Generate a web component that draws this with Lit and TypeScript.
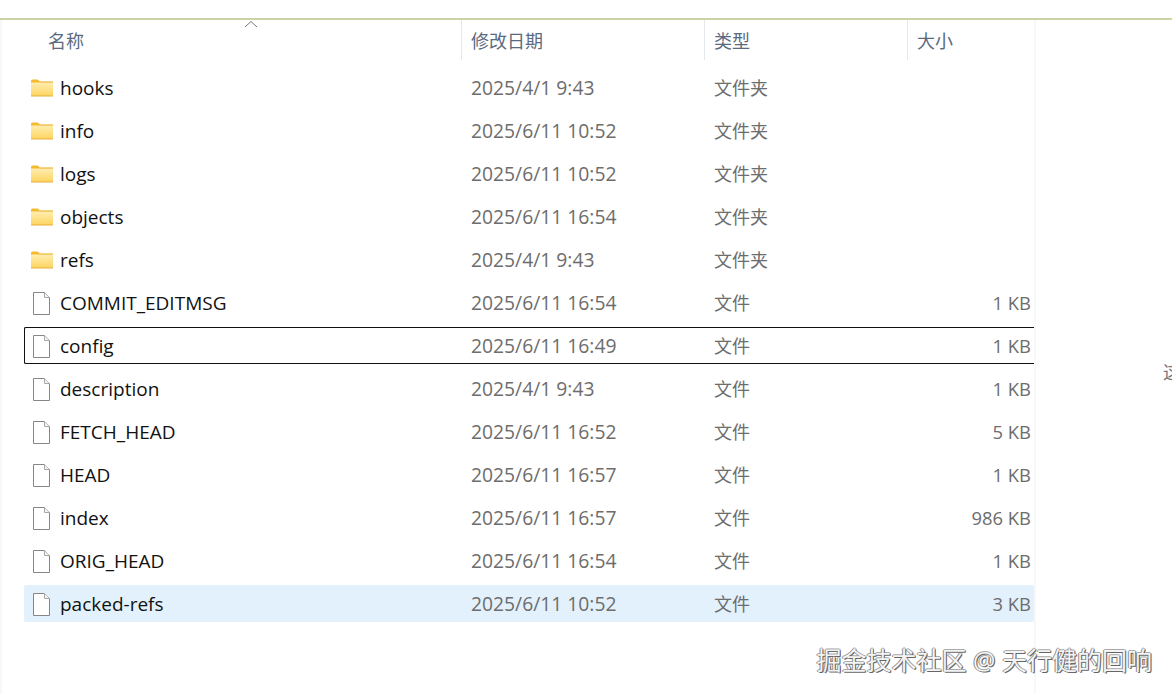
import { LitElement, html, css, svg } from "lit";
import { customElement } from "lit/decorators.js";

type Entry = { name: string; date: string; type: string; size: string; state?: string };

const folders: Entry[] = [
  { name: "hooks", date: "2025/4/1 9:43", type: "文件夹", size: "" },
  { name: "info", date: "2025/6/11 10:52", type: "文件夹", size: "" },
  { name: "logs", date: "2025/6/11 10:52", type: "文件夹", size: "" },
  { name: "objects", date: "2025/6/11 16:54", type: "文件夹", size: "" },
  { name: "refs", date: "2025/4/1 9:43", type: "文件夹", size: "" },
];

const files: Entry[] = [
  { name: "COMMIT_EDITMSG", date: "2025/6/11 16:54", type: "文件", size: "1 KB" },
  { name: "config", date: "2025/6/11 16:49", type: "文件", size: "1 KB", state: "focused" },
  { name: "description", date: "2025/4/1 9:43", type: "文件", size: "1 KB" },
  { name: "FETCH_HEAD", date: "2025/6/11 16:52", type: "文件", size: "5 KB" },
  { name: "HEAD", date: "2025/6/11 16:57", type: "文件", size: "1 KB" },
  { name: "index", date: "2025/6/11 16:57", type: "文件", size: "986 KB" },
  { name: "ORIG_HEAD", date: "2025/6/11 16:54", type: "文件", size: "1 KB" },
  { name: "packed-refs", date: "2025/6/11 10:52", type: "文件", size: "3 KB", state: "selected" },
];

const folderIcon = svg`<svg class="icon" width="22" height="18" viewBox="0 0 22 18">
  <defs>
    <linearGradient id="fg" x1="0" y1="0" x2="0" y2="1">
      <stop offset="0" stop-color="#ffeeb0" />
      <stop offset="1" stop-color="#fdd460" />
    </linearGradient>
  </defs>
  <path d="M0 2Q0 .5 1.5 .5H6.5L9 2.5H22V6H0Z" fill="#f5b92e" />
  <rect x="0" y="3.5" width="22" height="13.5" fill="url(#fg)" />
  <path d="M0 16.5H22V17.5H0Z" fill="#e6ae3a" />
  <path d="M9 2.6H22V3.6H9Z" fill="#eec566" />
</svg>`;

const fileIcon = svg`<svg class="icon" width="17" height="23" viewBox="0 0 17 23">
  <path d="M.5.5H11.5L16.5 5.5V22.5H.5Z" fill="#fff" stroke="#868686" />
  <path d="M11.5.5V5.5H16.5" fill="#f2f2f2" stroke="#a8a8a8" />
</svg>`;

@customElement("app-root")
export class AppRoot extends LitElement {
  static styles = css`
    :host {
      display: block;
      position: relative;
      width: 1172px;
      height: 694px;
      overflow: hidden;
      background: #fff;
      font-family: "Open Sans", "Noto Sans CJK SC", sans-serif;
      font-size: 19px;
    }
    .topline {
      margin-top: 18px;
      height: 2px;
      background: #c9d3a6;
    }
    .panel {
      width: 1036px;
      height: 674px;
      box-sizing: border-box;
      border-left: 2px solid #f8f8f8;
      border-right: 2px solid #f8f8f8;
    }
    .cols {
      display: grid;
      grid-template-columns: 437px 243px 203px 127px;
      margin-left: 22px;
      width: 1010px;
    }
    .header {
      height: 40px;
      position: relative;
      color: #5a6a80;
      font-size: 18px;
    }
    .header > div {
      display: flex;
      align-items: center;
      padding-left: 9px;
      border-left: 1px solid #e4e7eb;
    }
    .header > .name {
      padding-left: 24px;
      border-left: none;
    }
    .sort {
      position: absolute;
      left: 220px;
      top: 0;
    }
    .list {
      margin-top: 9px;
      display: flex;
      flex-direction: column;
      gap: 6px;
    }
    .row {
      height: 37px;
      box-sizing: border-box;
      align-items: center;
      color: #6d6d6d;
      line-height: 38px;
      white-space: nowrap;
    }
    .row.focused {
      box-shadow: inset 1px 0 0 #111, inset 0 1px 0 #111, inset 0 -1px 0 #111;
      border-radius: 2px 0 0 2px;
    }
    .row.selected {
      background: #e3f1fc;
      border-radius: 2px;
    }
    .cell-name {
      display: flex;
      align-items: center;
      color: #111;
    }
    .icon-box {
      width: 36px;
      padding-left: 7px;
      box-sizing: border-box;
      display: flex;
      align-items: center;
    }
    .file .icon-box {
      padding-left: 9px;
    }
    .cell-date {
      font-size: 19.3px;
      padding-left: 10px;
    }
    .cell-type {
      font-size: 18px;
      padding-left: 10px;
    }
    .cell-size {
      font-size: 18.4px;
      text-align: right;
      padding-right: 3px;
    }
    .cut {
      position: absolute;
      left: 1163px;
      top: 358px;
      color: #777;
      font-size: 18px;
    }
    .watermark {
      position: absolute;
      right: 20px;
      top: 643px;
      font-size: 25px;
      line-height: 34px;
      white-space: nowrap;
      color: #f4f4f4;
      text-shadow: 1px 1px 0 #666, -1px 0 0 #8a8a8a, 0 -1px 0 #aaa, 1px 0 0 #888;
    }
  `;

  private renderRow(e: Entry, icon: unknown, kind: string) {
    return html`<div class="cols row ${kind} ${e.state ?? ""}">
      <div class="cell-name">
        <span class="icon-box">${icon}</span>
        <span>${e.name}</span>
      </div>
      <div class="cell-date">${e.date}</div>
      <div class="cell-type">${e.type}</div>
      <div class="cell-size">${e.size}</div>
    </div>`;
  }

  render() {
    return html`
      <div class="topline"></div>
      <div class="panel">
        <div class="cols header">
          <div class="name">名称</div>
          <div>修改日期</div>
          <div>类型</div>
          <div>大小</div>
          <svg class="sort" width="14" height="8" viewBox="0 0 14 8">
            <path d="M1 7L7 1.5L13 7" fill="none" stroke="#777" stroke-width="1" />
          </svg>
        </div>
        <div class="list">
          ${folders.map((f) => this.renderRow(f, folderIcon, "folder"))}
          ${files.map((f) => this.renderRow(f, fileIcon, "file"))}
        </div>
      </div>
      <div class="cut">这</div>
      <div class="watermark">掘金技术社区 @ 天行健的回响</div>
    `;
  }
}
